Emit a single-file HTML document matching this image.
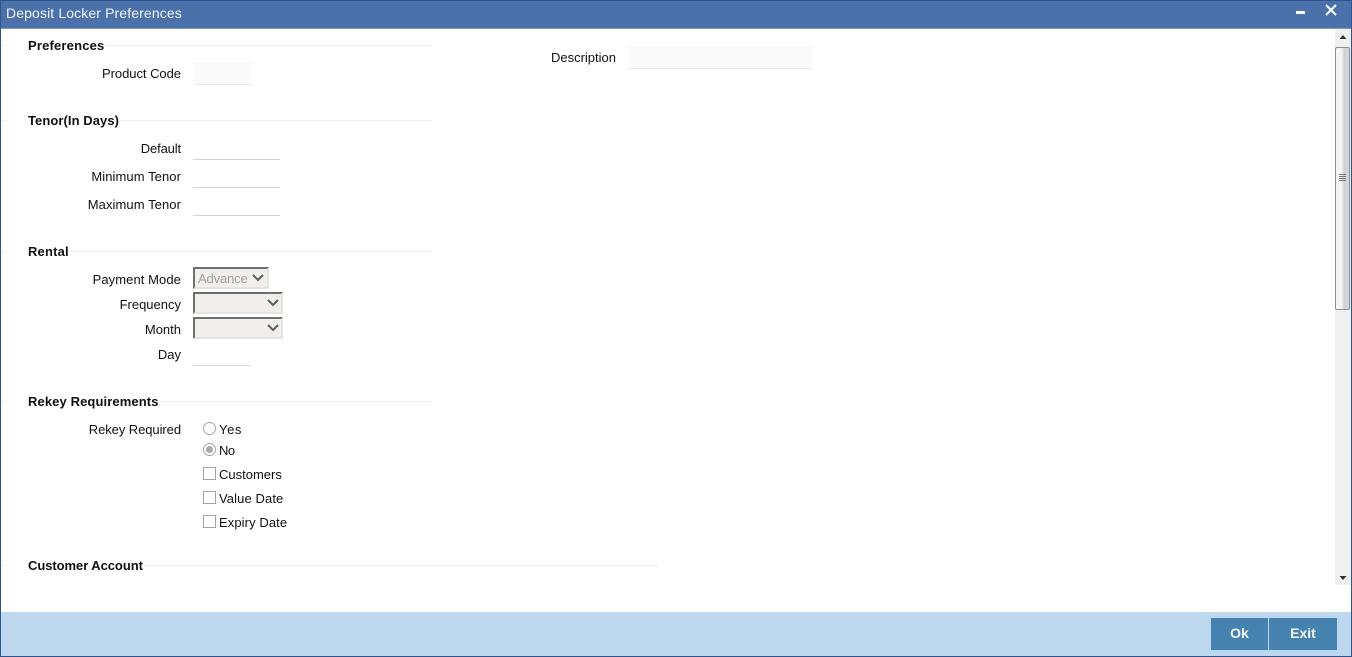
<!DOCTYPE html>
<html><head><meta charset="utf-8"><title>Deposit Locker Preferences</title>
<style>
html,body{margin:0;padding:0;background:#fff}
#w{position:relative;width:1352px;height:657px;overflow:hidden;background:#fff;font:13px/18px "Liberation Sans",Arial,sans-serif;color:#111}
#w div{position:absolute}
.l{text-align:right;width:180px;left:1px;height:18px;white-space:nowrap}
.h{left:28px;font-weight:bold;white-space:nowrap}
.r{height:1px;background:#eeeeee}
.u{height:1px;background:#d4d4d4}
.f{background:#fafafa;border-bottom:1px solid #eeeeee}
.s{background:#f0efeb;border-style:solid;border-color:#6e6e6e #e4e3df #e4e3df #6e6e6e;border-width:2px;box-sizing:border-box}
.t{left:219px;white-space:nowrap}
.c{left:203px;width:11px;height:11px;border:1px solid #a4a4a4;background:#fff}
.o{left:203px;width:11px;height:11px;border:1px solid #a4a4a4;border-radius:50%;background:#fff}
</style></head><body><div id="w">
<div style="left:0;top:0;width:1352px;height:29px;background:#4a71aa;border-top:1px solid #2e5590;box-sizing:border-box"></div>
<div style="left:0;top:28px;width:1352px;height:1px;background:#7e9bb5"></div>
<div style="left:6px;top:5px;font-size:14px;line-height:16px;letter-spacing:.12px;color:#f2f5fa;white-space:nowrap">Deposit Locker Preferences</div>
<div style="left:1296px;top:11px;width:9px;height:3px;background:#fff"></div>
<svg style="position:absolute;left:1325px;top:4px" width="12" height="12" viewBox="0 0 12 12"><path d="M1 1L11 11M11 1L1 11" stroke="#fff" stroke-width="2"/></svg>
<div style="left:0;top:0;width:1px;height:657px;background:#2e5590"></div>
<div style="left:1351px;top:0;width:1px;height:657px;background:#2e5590"></div>

<div class="r" style="left:1px;top:45px;width:5px"></div><div class="r" style="left:105px;top:45px;width:327px"></div>
<div class="h" style="top:37px;letter-spacing:.18px">Preferences</div>
<div class="l" style="top:65px;letter-spacing:-.04px">Product Code</div>
<div class="f" style="left:193px;top:62px;width:59px;height:22px"></div>
<div class="l" style="left:436px;top:49px">Description</div>
<div class="f" style="left:628px;top:46px;width:185px;height:22px"></div>

<div class="r" style="left:1px;top:120px;width:5px"></div><div class="r" style="left:120px;top:120px;width:312px"></div>
<div class="h" style="top:112px;letter-spacing:.07px">Tenor(In Days)</div>
<div class="l" style="top:140px;letter-spacing:-.14px">Default</div><div class="u" style="left:193px;top:159px;width:87px"></div>
<div class="l" style="top:168px;letter-spacing:.08px">Minimum Tenor</div><div class="u" style="left:193px;top:187px;width:87px"></div>
<div class="l" style="top:196px;letter-spacing:.08px">Maximum Tenor</div><div class="u" style="left:193px;top:215px;width:87px"></div>

<div class="r" style="left:1px;top:251px;width:5px"></div><div class="r" style="left:70px;top:251px;width:362px"></div>
<div class="h" style="top:243px;letter-spacing:.17px">Rental</div>
<div class="l" style="top:271px;letter-spacing:.08px">Payment Mode</div>
<div class="s" style="left:193px;top:267px;width:76px;height:22px"></div>
<div style="left:198px;top:270px;color:#a3a3a3;white-space:nowrap;letter-spacing:-.14px">Advance</div>
<svg style="position:absolute;left:252px;top:274px" width="12" height="8" viewBox="0 0 12 8"><path d="M1 1L6 6L11 1" fill="none" stroke="#5f5f5f" stroke-width="2"/></svg>
<div class="l" style="top:296px">Frequency</div>
<div class="s" style="left:193px;top:292px;width:90px;height:22px"></div>
<svg style="position:absolute;left:267px;top:299px" width="12" height="8" viewBox="0 0 12 8"><path d="M1 1L6 6L11 1" fill="none" stroke="#5f5f5f" stroke-width="2"/></svg>
<div class="l" style="top:321px">Month</div>
<div class="s" style="left:193px;top:317px;width:90px;height:22px"></div>
<svg style="position:absolute;left:267px;top:324px" width="12" height="8" viewBox="0 0 12 8"><path d="M1 1L6 6L11 1" fill="none" stroke="#5f5f5f" stroke-width="2"/></svg>
<div class="l" style="top:346px">Day</div><div class="u" style="left:193px;top:365px;width:57px"></div>

<div class="r" style="left:1px;top:401px;width:5px"></div><div class="r" style="left:160px;top:401px;width:272px"></div>
<div class="h" style="top:393px;letter-spacing:.11px">Rekey Requirements</div>
<div class="l" style="top:421px;letter-spacing:-.07px">Rekey Required</div>
<div class="o" style="top:422px"></div><div class="t" style="top:421px;letter-spacing:.6px">Yes</div>
<div class="o" style="top:443px"></div><div style="left:206px;top:446px;width:7px;height:7px;border-radius:50%;background:#a8a8a8"></div><div class="t" style="top:442px;letter-spacing:-.5px">No</div>
<div class="c" style="top:467px"></div><div class="t" style="top:466px">Customers</div>
<div class="c" style="top:491px"></div><div class="t" style="top:490px;letter-spacing:.1px">Value Date</div>
<div class="c" style="top:515px"></div><div class="t" style="top:514px;letter-spacing:.09px">Expiry Date</div>

<div class="r" style="left:1px;top:565px;width:5px"></div><div class="r" style="left:144px;top:565px;width:514px"></div>
<div class="h" style="top:557px;letter-spacing:-.06px">Customer Account</div>

<div style="left:1335px;top:29px;width:16px;height:556px;background:#f0f0f0"></div>
<svg style="position:absolute;left:1335px;top:29px" width="16" height="20" viewBox="0 0 16 20"><path d="M8 6L11.500 10H4.500z" fill="#333"/></svg>
<div style="left:1335px;top:47px;width:15px;height:263px;box-sizing:border-box;border:1px solid #8e8e8e;border-radius:2px;background:linear-gradient(90deg,#f4f4f4 0,#f4f4f4 40%,#d0d0d4 65%,#d8d8dc 100%)"></div>
<div style="left:1339px;top:174px;width:7px;height:1px;background:#777;box-shadow:0 2px 0 #777,0 4px 0 #777,0 6px 0 #777"></div>
<svg style="position:absolute;left:1335px;top:570px" width="16" height="14" viewBox="0 0 16 14"><path d="M4.500 6H11.500L8 10z" fill="#333"/></svg>

<div style="left:1px;top:612px;width:1350px;height:44px;background:#bdd7ee"></div>
<div style="left:0;top:656px;width:1352px;height:1px;background:#2e5590"></div>
<div style="left:1211px;top:618px;width:57px;height:32px;background:#4682b0;color:#f4f8fb;font-weight:bold;font-size:14px;line-height:31px;text-align:center">Ok</div>
<div style="left:1269px;top:618px;width:68px;height:32px;background:#4682b0;color:#f4f8fb;font-weight:bold;font-size:14px;line-height:31px;text-align:center">Exit</div>
</div></body></html>
